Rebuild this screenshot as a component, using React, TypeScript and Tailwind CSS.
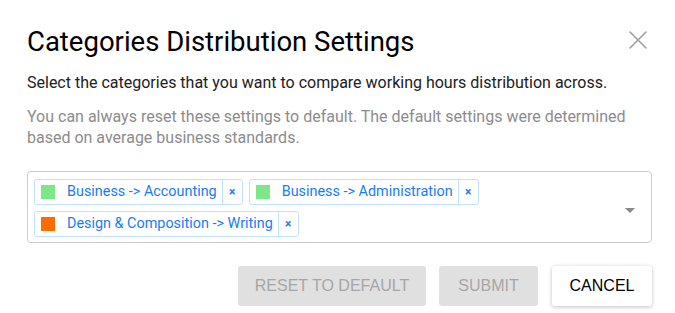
import { X } from "lucide-react";

const chips = [
  { label: "Business -> Accounting", color: "bg-[#7ee787]" },
  { label: "Business -> Administration", color: "bg-[#7ee787]" },
  { label: "Design & Composition -> Writing", color: "bg-[#ff6d00]" },
];

function Chip({ label, color }: { label: string; color: string }) {
  return (
    <div className="flex h-[26px] items-stretch rounded-[3px] border border-[#c2e0ff] bg-white text-[14.4px] text-[#1a7cf4]">
      <div className="flex items-center pl-[6px] pr-[12px]">
        <span className={`h-[14px] w-[14px] ${color}`} />
      </div>
      <div className="flex items-center pr-[5px]">{label}</div>
      <div className="flex w-[20px] items-center justify-center border-l border-[#c2e0ff] text-[12px] font-bold">×</div>
    </div>
  );
}

export default function App() {
  return (
    <div className="h-[313px] w-[675px] bg-white pl-[27px] pr-[23px] pt-[24px] font-['Roboto',sans-serif]">
      <div className="flex items-start justify-between">
        <h2 className="text-[27.5px] leading-[36px] text-black">Categories Distribution Settings</h2>
        <button className="mr-[-2px] text-[#a0a0a0]">
          <X size={32} strokeWidth={1.2} />
        </button>
      </div>
      <p className="mt-[12px] text-[16px] leading-[21px] text-[#212121]">
        Select the categories that you want to compare working hours distribution across.
      </p>
      <p className="mt-[13px] text-[16px] leading-[21px] text-[#8c8c8c]">
        You can always reset these settings to default. The default settings were determined based on average business standards.
      </p>
      <div className="mt-[23px] flex h-[72px] w-[625px] items-start rounded-[4px] border border-[#cccccc] pb-[6px] pt-[7px] pl-[6px] pr-[16px]">
        <div className="flex flex-1 flex-wrap gap-x-[6px] gap-y-[6px]">
          {chips.map((c) => (
            <Chip key={c.label} label={c.label} color={c.color} />
          ))}
        </div>
        <div className="mt-[29px] h-0 w-0 border-x-[5px] border-t-[5px] border-x-transparent border-t-[#888888]" />
      </div>
      <div className="mt-[23px] flex justify-end gap-[13px] font-['Liberation_Sans',sans-serif] text-[16px]">
        <button className="h-[40px] w-[188px] rounded-[3px] bg-[#e0e0e0] text-[#a6a6a6]">RESET TO DEFAULT</button>
        <button className="h-[40px] w-[99px] rounded-[3px] bg-[#e0e0e0] text-[#a6a6a6]">SUBMIT</button>
        <button className="ml-[1px] h-[40px] w-[100px] rounded-[3px] bg-white text-black shadow-[0_1px_4px_rgba(0,0,0,0.25)]">CANCEL</button>
      </div>
    </div>
  );
}
